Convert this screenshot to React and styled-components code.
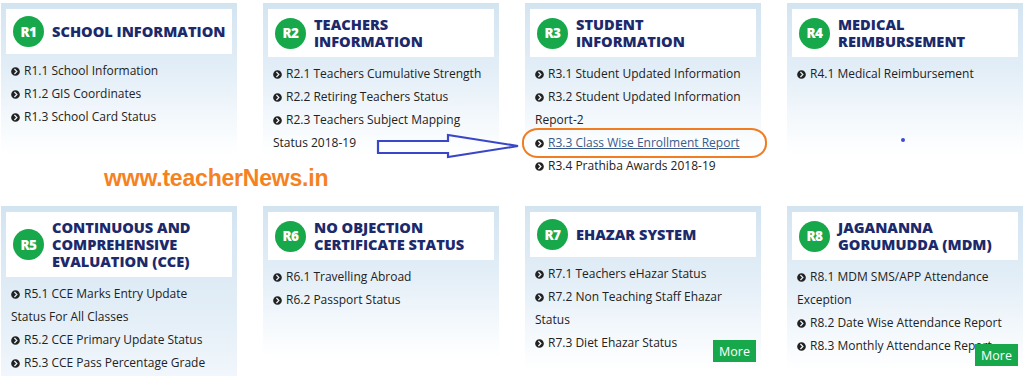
import React from "react";
import styled, { createGlobalStyle } from "styled-components";
import { FaChevronCircleRight } from "react-icons/fa";

const Global = createGlobalStyle`
  html, body { margin: 0; padding: 0; background: #ffffff; }
  body {
    width: 1024px;
    height: 376px;
    overflow: hidden;
    font-family: "Open Sans", "Liberation Sans", sans-serif;
  }
`;

const Page = styled.div`
  position: relative;
  width: 1024px;
  height: 376px;
  box-sizing: border-box;
  padding: 3px 0 0 1px;
  display: flex;
  flex-direction: column;
  overflow: hidden;
`;

const CardRow = styled.div`
  display: grid;
  grid-template-columns: repeat(4, 236px);
  column-gap: 26px;
  align-items: start;
  height: ${(p) => p.$h}px;
`;

const Band = styled.div`
  height: 53px;
  display: flex;
  align-items: center;
  padding: 0 0 4px 103px;
  box-sizing: border-box;
`;

const Card = styled.div`
  position: relative;
  height: ${(p) => p.$h}px;
  box-sizing: border-box;
  padding: 6px 5px 0;
  background: linear-gradient(180deg, #d3e4f1 0%, #e3eef7 45%, #f3f8fc 75%, #ffffff 100%);
`;

const Header = styled.div`
  display: flex;
  align-items: center;
  gap: 8px;
  min-height: 45px;
  box-sizing: border-box;
  padding: 7px 8px 7px 7px;
  background: #ffffff;
`;

const Badge = styled.div`
  flex: 0 0 31px;
  width: 31px;
  height: 31px;
  border-radius: 50%;
  background: #17a84b;
  color: #ffffff;
  display: flex;
  align-items: center;
  justify-content: center;
  font-weight: 800;
  font-size: 13.5px;
  letter-spacing: -0.4px;
`;

const Title = styled.h3`
  margin: 0;
  color: #1c2a6b;
  font-size: 14.6px;
  font-weight: 800;
  line-height: 17px;
  text-transform: uppercase;
`;

const TitleLine = styled.span`
  display: block;
  white-space: nowrap;
`;

const List = styled.ul`
  list-style: none;
  margin: 0;
  padding: 5px 0 0 5px;
`;

const Item = styled.li`
  font-size: 12px;
  line-height: 23px;
  color: #222222;
  white-space: nowrap;
`;

const ItemText = styled.span`
  color: ${(p) => (p.$link ? "#3a5a8c" : "inherit")};
  text-decoration: ${(p) => (p.$link ? "underline" : "none")};
`;

const Bullet = styled(FaChevronCircleRight)`
  width: 9px;
  height: 9px;
  color: #222222;
  vertical-align: -1px;
  margin-right: 4px;
`;

const MoreButton = styled.span`
  position: absolute;
  right: 5px;
  bottom: ${(p) => p.$bottom}px;
  width: 43px;
  height: 22px;
  display: flex;
  align-items: center;
  justify-content: center;
  background: #17a84b;
  color: #ffffff;
  font-size: 12.5px;
`;

const Watermark = styled.div`
  font-family: "Liberation Sans", Arial, sans-serif;
  font-weight: 700;
  font-size: 23px;
  letter-spacing: -0.2px;
  color: #f5821f;
  text-shadow: 0 0 2px #ffffff;
  white-space: nowrap;
`;

const Highlight = styled.div`
  position: absolute;
  left: 522px;
  top: 128px;
  width: 245px;
  height: 30px;
  box-sizing: border-box;
  border: 2.5px solid #f07d22;
  border-radius: 16px / 14px;
`;

const ArrowMark = styled.svg`
  position: absolute;
  left: 376px;
  top: 133px;
  width: 146px;
  height: 26px;
`;

const Dot = styled.span`
  position: absolute;
  left: 901px;
  top: 138px;
  width: 4px;
  height: 4px;
  border-radius: 50%;
  background: #3d4bd0;
`;

const topCards = [
  {
    id: "R1",
    h: 152,
    title: ["SCHOOL INFORMATION"],
    items: [["R1.1 School Information"], ["R1.2 GIS Coordinates"], ["R1.3 School Card Status"]],
  },
  {
    id: "R2",
    h: 152,
    title: ["TEACHERS", "INFORMATION"],
    items: [
      ["R2.1 Teachers Cumulative Strength"],
      ["R2.2 Retiring Teachers Status"],
      ["R2.3 Teachers Subject Mapping", "Status 2018-19"],
    ],
  },
  {
    id: "R3",
    h: 152,
    title: ["STUDENT", "INFORMATION"],
    items: [
      ["R3.1 Student Updated Information"],
      ["R3.2 Student Updated Information", "Report-2"],
      { link: true, lines: ["R3.3 Class Wise Enrollment Report"] },
      ["R3.4 Prathiba Awards 2018-19"],
    ],
  },
  {
    id: "R4",
    h: 152,
    title: ["MEDICAL", "REIMBURSEMENT"],
    items: [["R4.1 Medical Reimbursement"]],
  },
];

const bottomCards = [
  {
    id: "R5",
    h: 240,
    title: ["CONTINUOUS AND", "COMPREHENSIVE", "EVALUATION (CCE)"],
    items: [
      ["R5.1 CCE Marks Entry Update", "Status For All Classes"],
      ["R5.2 CCE Primary Update Status"],
      ["R5.3 CCE Pass Percentage Grade"],
    ],
  },
  {
    id: "R6",
    h: 152,
    title: ["NO OBJECTION", "CERTIFICATE STATUS"],
    items: [["R6.1 Travelling Abroad"], ["R6.2 Passport Status"]],
  },
  {
    id: "R7",
    h: 165,
    more: 9,
    title: ["EHAZAR SYSTEM"],
    items: [
      ["R7.1 Teachers eHazar Status"],
      ["R7.2 Non Teaching Staff Ehazar", "Status"],
      ["R7.3 Diet Ehazar Status"],
    ],
  },
  {
    id: "R8",
    h: 165,
    more: 5,
    title: ["JAGANANNA", "GORUMUDDA (MDM)"],
    items: [
      ["R8.1 MDM SMS/APP Attendance", "Exception"],
      ["R8.2 Date Wise Attendance Report"],
      ["R8.3 Monthly Attendance Report"],
    ],
  },
];

function ListItem({ item }) {
  const lines = Array.isArray(item) ? item : item.lines;
  const link = !Array.isArray(item) && item.link;
  return (
    <Item>
      <Bullet />
      <ItemText $link={link}>{lines[0]}</ItemText>
      {lines.slice(1).map((l) => (
        <React.Fragment key={l}>
          <br />
          {l}
        </React.Fragment>
      ))}
    </Item>
  );
}

function InfoCard({ card }) {
  return (
    <Card $h={card.h}>
      <Header>
        <Badge>{card.id}</Badge>
        <Title>
          {card.title.map((t) => (
            <TitleLine key={t}>{t}</TitleLine>
          ))}
        </Title>
      </Header>
      <List>
        {card.items.map((it, i) => (
          <ListItem key={i} item={it} />
        ))}
      </List>
      {card.more !== undefined && <MoreButton $bottom={card.more}>More</MoreButton>}
    </Card>
  );
}

export default function App() {
  return (
    <>
      <Global />
      <Page>
        <CardRow $h={152}>
          {topCards.map((c) => (
            <InfoCard key={c.id} card={c} />
          ))}
        </CardRow>
        <Band>
          <Watermark>www.teacherNews.in</Watermark>
        </Band>
        <CardRow $h={170}>
          {bottomCards.map((c) => (
            <InfoCard key={c.id} card={c} />
          ))}
        </CardRow>
        <Highlight />
        <ArrowMark viewBox="0 0 146 26">
          <path
            d="M2 8 L72 8 L72 2 L142 13 L72 24 L72 20 L2 20 Z"
            fill="none"
            stroke="#3a46c8"
            strokeWidth="2.2"
            strokeLinejoin="miter"
          />
        </ArrowMark>
        <Dot />
      </Page>
    </>
  );
}
